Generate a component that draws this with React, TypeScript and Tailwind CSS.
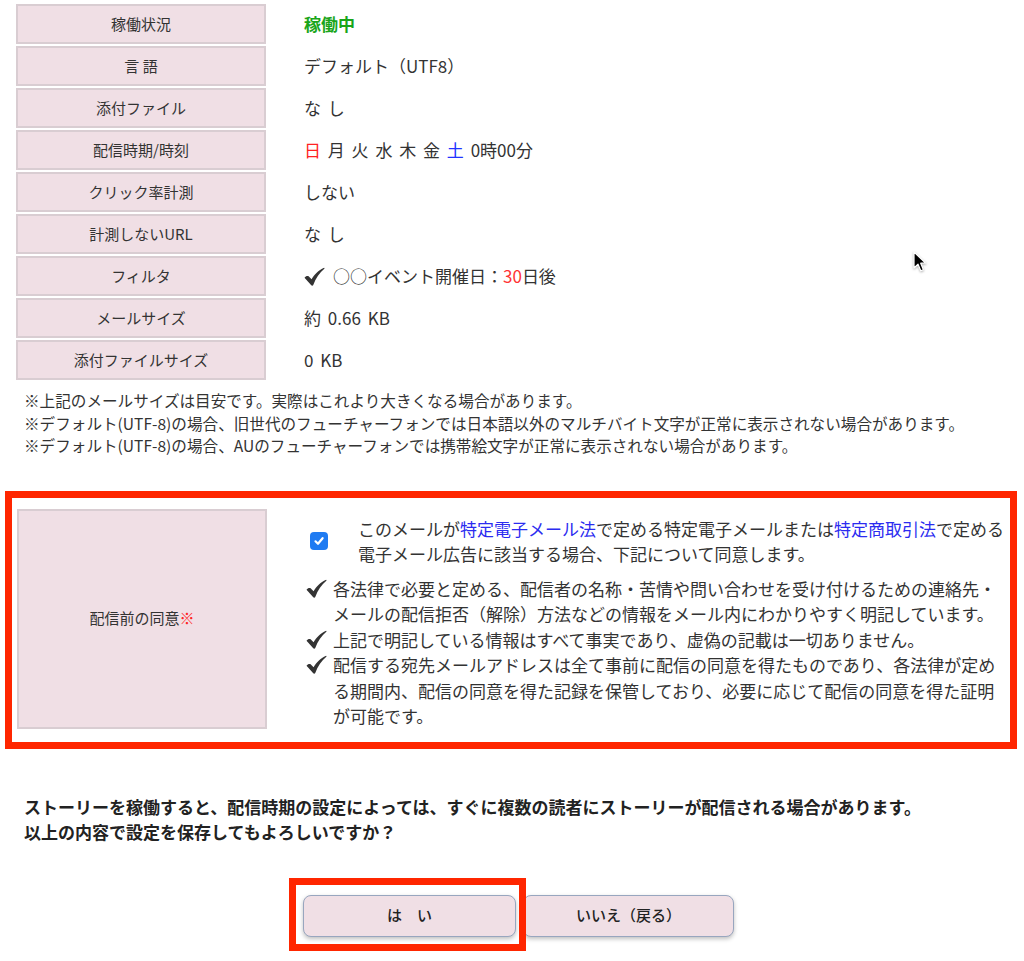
import type { ReactNode } from "react"

const labelCell =
  "w-[250px] shrink-0 border-2 border-[#d9cdd2] bg-[#f0dfe5] flex items-center justify-center text-[15px] text-[#333]"

function Check({ className = "" }: { className?: string }) {
  return (
    <svg viewBox="0 0 20 18" className={className} fill="#333">
      <path d="M0.5 10.2 C1.6 8.6 3.2 8 4.4 8.8 L7.2 11.6 C10 7 13.5 3 19.2 0.6 L19.6 1.4 C14.6 5.6 11.4 10.4 8.8 17.2 C8.4 18 7.4 18 6.9 17.4 Z" />
    </svg>
  )
}

const rows: { label: string; value: ReactNode }[] = [
  { label: "稼働状況", value: <span className="font-bold text-[#1aa51a]">稼働中</span> },
  { label: "言 語", value: "デフォルト（UTF8）" },
  { label: "添付ファイル", value: "な し" },
  {
    label: "配信時期/時刻",
    value: (
      <span>
        <span className="text-[#ff2222]">日</span> 月 火 水 木 金 <span className="text-[#2233ff]">土</span> 0時00分
      </span>
    ),
  },
  { label: "クリック率計測", value: "しない" },
  { label: "計測しないURL", value: "な し" },
  {
    label: "フィルタ",
    value: (
      <span className="flex items-center">
        <Check className="w-[21px] h-[19px] mr-[8px]" />
        <span>
          ○○イベント開催日：<span className="text-[#ff3333]">30</span>日後
        </span>
      </span>
    ),
  },
  { label: "メールサイズ", value: "約 0.66 KB" },
  { label: "添付ファイルサイズ", value: "0 KB" },
]

const checks: ReactNode[] = [
  <>
    各法律で必要と定める、配信者の名称・苦情や問い合わせを受け付けるための連絡先・
    <br />
    メールの配信拒否（解除）方法などの情報をメール内にわかりやすく明記しています。
  </>,
  <>上記で明記している情報はすべて事実であり、虚偽の記載は一切ありません。</>,
  <>
    配信する宛先メールアドレスは全て事前に配信の同意を得たものであり、各法律が定め
    <br />
    る期間内、配信の同意を得た記録を保管しており、必要に応じて配信の同意を得た証明
    <br />
    が可能です。
  </>,
]

export default function App() {
  return (
    <div className="relative w-[1024px] h-[961px] overflow-hidden bg-white text-[#333] font-['Noto_Sans_CJK_JP','Noto_Sans',sans-serif]">
      <div className="pt-[4px] pl-[16px] flex flex-col gap-[2px]">
        {rows.map(r => (
          <div key={r.label} className="flex h-[40px]">
            <div className={labelCell}>{r.label}</div>
            <div className="pl-[38px] flex items-center text-[17px] whitespace-pre [word-spacing:3px]">{r.value}</div>
          </div>
        ))}
      </div>

      <div className="mt-[9px] pl-[24px] text-[15.6px] leading-[22.5px]">
        <p>※上記のメールサイズは目安です。実際はこれより大きくなる場合があります。</p>
        <p>※デフォルト(UTF-8)の場合、旧世代のフューチャーフォンでは日本語以外のマルチバイト文字が正常に表示されない場合があります。</p>
        <p>※デフォルト(UTF-8)の場合、AUのフューチャーフォンでは携帯絵文字が正常に表示されない場合があります。</p>
      </div>

      <div className="mt-[34px] ml-[5px] w-[1012px] border-[7px] border-[#ff2600] pt-[11px] pb-[13px] pl-[5px]">
        <div className="flex">
          <div className={labelCell + " self-stretch"}>
            配信前の同意<span className="text-[#ff2222]">※</span>
          </div>
          <div className="ml-[2px] pl-[37px] pt-[7px] text-[17px] whitespace-nowrap">
            <div className="flex items-center">
              <span className="ml-[4px] w-[18px] h-[18px] rounded-[4px] bg-[#1f7bf2] flex items-center justify-center">
                <svg viewBox="0 0 12 12" className="w-[12px] h-[12px]" fill="none" stroke="white" strokeWidth="2.2" strokeLinecap="round" strokeLinejoin="round">
                  <path d="M2.5 6.3 L5 8.8 L9.6 3.2" />
                </svg>
              </span>
              <p className="ml-[30px] leading-[25px]">
                このメールが<span className="text-[#2b2bf0]">特定電子メール法</span>で定める特定電子メールまたは
                <span className="text-[#2b2bf0]">特定商取引法</span>で定める
                <br />
                電子メール広告に該当する場合、下記について同意します。
              </p>
            </div>
            <ul className="mt-[10px] leading-[25.5px]">
              {checks.map((c, i) => (
                <li key={i} className="flex">
                  <Check className="shrink-0 w-[21px] h-[19px] mt-[3px] mr-[6px]" />
                  <span>{c}</span>
                </li>
              ))}
            </ul>
          </div>
        </div>
      </div>

      <div className="mt-[45px] pl-[24px] text-[17px] font-bold leading-[25px] text-[#222]">
        <p>ストーリーを稼働すると、配信時期の設定によっては、すぐに複数の読者にストーリーが配信される場合があります。</p>
        <p>以上の内容で設定を保存してもよろしいですか？</p>
      </div>

      <div className="mt-[51px] pl-[303px] flex gap-[7px]">
        <div className="relative">
          <button className="w-[213px] h-[42px] rounded-[8px] border border-[#98a6bf] bg-[#f0dfe5] shadow-[0_2px_4px_rgba(0,0,0,0.25)] text-[15px] font-medium text-[#222]">
            は　い
          </button>
          <div className="absolute -left-[14px] -top-[17px] w-[237px] h-[73px] border-[7px] border-[#ff2600] z-10" />
        </div>
        <button className="w-[211px] h-[42px] rounded-[8px] border border-[#98a6bf] bg-[#f0dfe5] shadow-[0_2px_4px_rgba(0,0,0,0.25)] text-[15px] font-medium text-[#222]">
          いいえ（戻る）
        </button>
      </div>

      <svg viewBox="0 0 14 22" className="absolute left-[913px] top-[251px] w-[14px] h-[22px] drop-shadow-[0_1px_1px_rgba(0,0,0,0.3)]">
        <path d="M1 1 L1 17 L5 13.2 L7.8 19.8 L10.4 18.7 L7.7 12.2 L12.8 12.2 Z" fill="black" stroke="white" strokeWidth="1.2" strokeLinejoin="round" />
      </svg>
    </div>
  )
}
